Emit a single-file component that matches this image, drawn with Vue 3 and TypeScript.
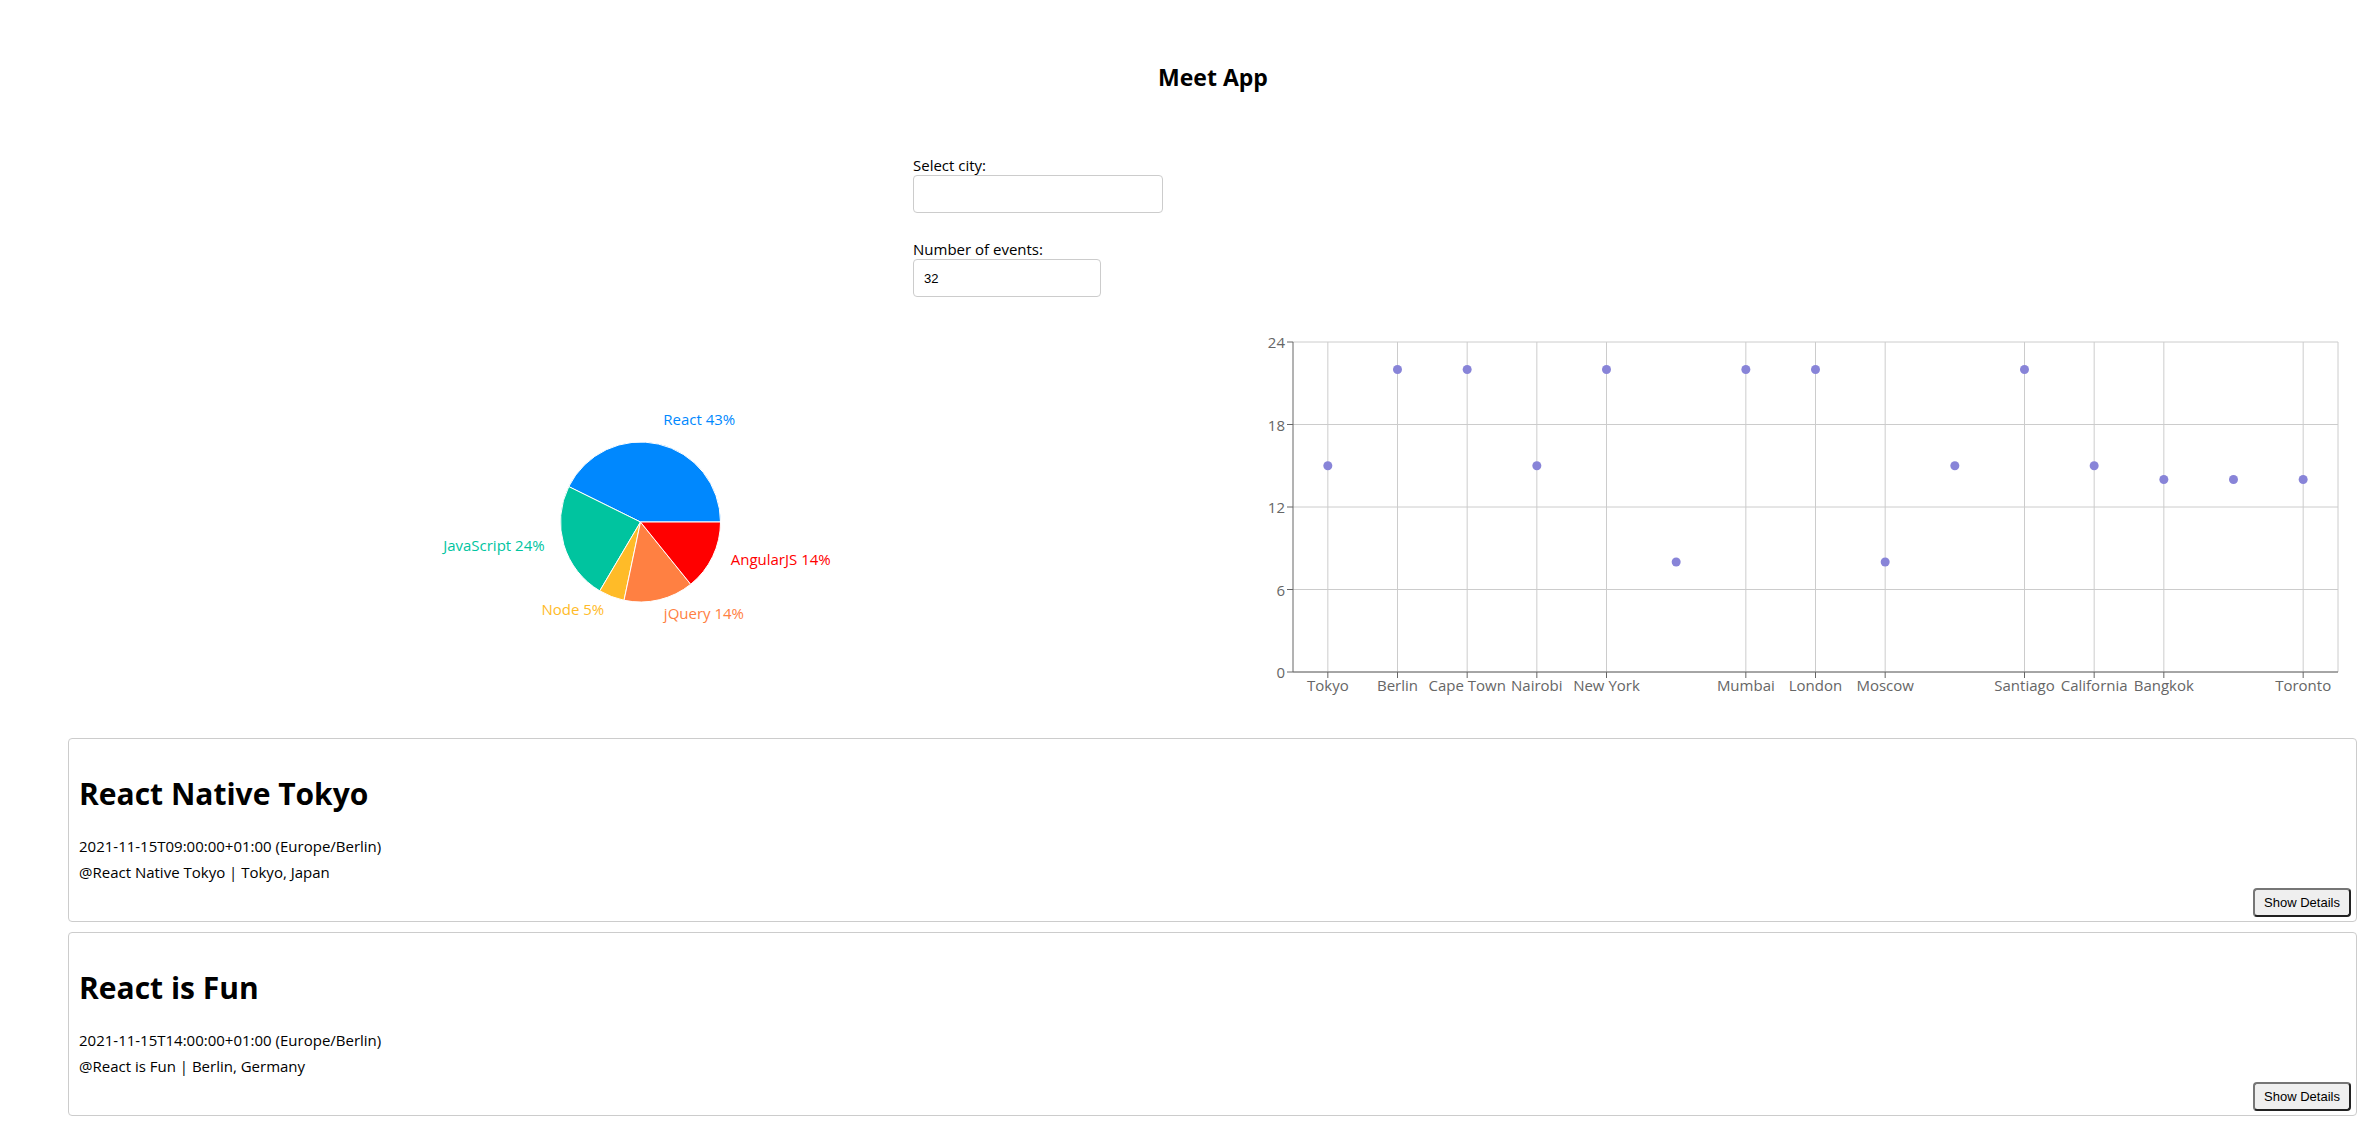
<script setup lang="ts">
import { computed, onBeforeUnmount, onMounted, ref } from 'vue'

interface Genre {
  name: string
  value: number
  color: string
}

interface CityCount {
  city: string
  count: number
  labelled: boolean
}

interface MeetEvent {
  id: number
  summary: string
  start: string
  location: string
}

const city = ref('')
const numberOfEvents = ref(32)

const genres: Genre[] = [
  { name: 'React', value: 427, color: '#0088fe' },
  { name: 'JavaScript', value: 238, color: '#00c49f' },
  { name: 'Node', value: 52, color: '#ffbb28' },
  { name: 'jQuery', value: 141, color: '#ff8042' },
  { name: 'AngularJS', value: 142, color: '#ff0000' },
]

const cities: CityCount[] = [
  { city: 'Tokyo', count: 15, labelled: true },
  { city: 'Berlin', count: 22, labelled: true },
  { city: 'Cape Town', count: 22, labelled: true },
  { city: 'Nairobi', count: 15, labelled: true },
  { city: 'New York', count: 22, labelled: true },
  { city: '', count: 8, labelled: false },
  { city: 'Mumbai', count: 22, labelled: true },
  { city: 'London', count: 22, labelled: true },
  { city: 'Moscow', count: 8, labelled: true },
  { city: '', count: 15, labelled: false },
  { city: 'Santiago', count: 22, labelled: true },
  { city: 'California', count: 15, labelled: true },
  { city: 'Bangkok', count: 14, labelled: true },
  { city: '', count: 14, labelled: false },
  { city: 'Toronto', count: 14, labelled: true },
]

const events: MeetEvent[] = [
  {
    id: 1,
    summary: 'React Native Tokyo',
    start: '2021-11-15T09:00:00+01:00 (Europe/Berlin)',
    location: '@React Native Tokyo | Tokyo, Japan',
  },
  {
    id: 2,
    summary: 'React is Fun',
    start: '2021-11-15T14:00:00+01:00 (Europe/Berlin)',
    location: '@React is Fun | Berlin, Germany',
  },
]

const chartHeight = 400
const chartWidth = ref(600)
const chartBox = ref<HTMLElement | null>(null)
let observer: ResizeObserver | undefined

function measure(): void {
  if (chartBox.value) chartWidth.value = chartBox.value.getBoundingClientRect().width
}

onMounted(() => {
  measure()
  observer = new ResizeObserver(measure)
  if (chartBox.value) observer.observe(chartBox.value)
})
onBeforeUnmount(() => observer?.disconnect())

// Pie: slices run counter-clockwise from three o'clock.
const outerRadius = 80
const labelRadius = 100

const slices = computed(() => {
  const cx = chartWidth.value / 2
  const cy = chartHeight / 2
  const total = genres.reduce((sum, g) => sum + g.value, 0)
  const point = (angle: number, r: number) => ({
    x: cx + r * Math.cos(angle),
    y: cy - r * Math.sin(angle),
  })
  let angle = 0
  return genres.map((g) => {
    const sweep = (g.value / total) * Math.PI * 2
    const from = point(angle, outerRadius)
    const to = point(angle + sweep, outerRadius)
    const label = point(angle + sweep / 2, labelRadius)
    angle += sweep
    const large = sweep > Math.PI ? 1 : 0
    return {
      ...g,
      path: `M${cx},${cy}L${from.x},${from.y}A${outerRadius},${outerRadius},0,${large},0,${to.x},${to.y}Z`,
      label,
      anchor: label.x > cx ? ('start' as const) : ('end' as const),
      text: `${g.name} ${((g.value / total) * 100).toFixed(0)}%`,
    }
  })
})

// Scatter plot
const yTicks = [0, 6, 12, 18, 24]
const plot = computed(() => ({
  left: 80,
  right: chartWidth.value - 20,
  top: 20,
  bottom: chartHeight - 50,
}))
const yFor = (v: number): number =>
  plot.value.bottom - (v / 24) * (plot.value.bottom - plot.value.top)
const points = computed(() => {
  const band = (plot.value.right - plot.value.left) / cities.length
  return cities.map((c, i) => ({
    ...c,
    x: plot.value.left + band * (i + 0.5),
    y: yFor(c.count),
  }))
})
const ticks = computed(() => points.value.filter((p) => p.labelled))
</script>

<template>
  <main class="app">
    <h2 class="title">Meet App</h2>

    <form class="filters" @submit.prevent>
      <div class="field">
        <label for="city">Select city:</label>
        <input id="city" v-model="city" class="city" type="text" />
      </div>
      <div class="field">
        <label for="count">Number of events:</label>
        <input id="count" v-model="numberOfEvents" class="count" type="text" />
      </div>
    </form>

    <section class="charts">
      <div ref="chartBox" class="chart">
        <svg :width="chartWidth" :height="chartHeight" role="img" aria-label="Events by topic">
          <path v-for="s in slices" :key="s.name" :d="s.path" :fill="s.color" stroke="#fff" />
          <text
            v-for="s in slices"
            :key="s.text"
            :x="s.label.x"
            :y="s.label.y"
            :fill="s.color"
            :text-anchor="s.anchor"
          >{{ s.text }}</text>
        </svg>
      </div>

      <div class="chart">
        <svg :width="chartWidth" :height="chartHeight" role="img" aria-label="Events by city">
          <g stroke="#ccc">
            <line v-for="t in yTicks" :key="t" :x1="plot.left" :x2="plot.right" :y1="yFor(t)" :y2="yFor(t)" />
            <line v-for="p in ticks" :key="p.city" :x1="p.x" :x2="p.x" :y1="plot.top" :y2="plot.bottom" />
            <line :x1="plot.right" :x2="plot.right" :y1="plot.top" :y2="plot.bottom" />
          </g>
          <g stroke="#666">
            <line :x1="plot.left" :x2="plot.right" :y1="plot.bottom" :y2="plot.bottom" />
            <line :x1="plot.left" :x2="plot.left" :y1="plot.top" :y2="plot.bottom" />
            <line v-for="t in yTicks" :key="t" :x1="plot.left - 6" :x2="plot.left" :y1="yFor(t)" :y2="yFor(t)" />
            <line v-for="p in ticks" :key="p.city" :x1="p.x" :x2="p.x" :y1="plot.bottom" :y2="plot.bottom + 6" />
          </g>
          <g fill="#666">
            <text v-for="t in yTicks" :key="t" :x="plot.left - 8" :y="yFor(t) + 6" text-anchor="end">{{ t }}</text>
            <text v-for="p in ticks" :key="p.city" :x="p.x" :y="plot.bottom + 19" text-anchor="middle">{{ p.city }}</text>
          </g>
          <circle v-for="(p, i) in points" :key="i" :cx="p.x" :cy="p.y" r="4.5" fill="#8884d8" />
        </svg>
      </div>
    </section>

    <ul class="events">
      <li v-for="e in events" :key="e.id" class="event">
        <h1>{{ e.summary }}</h1>
        <p>{{ e.start }}</p>
        <p>{{ e.location }}</p>
        <button type="button">Show Details</button>
      </li>
    </ul>
  </main>
</template>

<style>
body {
  margin: 0;
  background: #fff;
}
</style>

<style scoped>
.app {
  padding: 61px 5px 4px 68px;
  color: #000;
  font-family: 'Open Sans', 'Noto Sans', sans-serif;
  font-size: 15px;
  line-height: 20px;
}

.title {
  margin: 0 0 62px;
  font-size: 23px;
  line-height: 32px;
  text-align: center;
}

.filters {
  display: flex;
  flex-direction: column;
  gap: 26px;
  width: 600px;
  margin: 0 auto 25px;
}

.field {
  display: flex;
  flex-direction: column;
  align-items: flex-start;
}

.field input {
  box-sizing: border-box;
  height: 38px;
  padding: 0 10px;
  border: 1px solid #ccc;
  border-radius: 4px;
  background: #fff;
  color: #000;
  font-family: 'Liberation Sans', Arial, sans-serif;
  font-size: 13px;
}

.city {
  width: 250px;
}

.count {
  width: 188px;
}

.charts {
  display: flex;
  margin-bottom: 16px;
}

.chart {
  flex: 1 1 0;
  min-width: 0;
  height: 400px;
}

.chart svg {
  display: block;
}

.events {
  display: flex;
  flex-direction: column;
  gap: 10px;
  margin: 0 1px 0 0;
  padding: 0;
  list-style: none;
}

.event {
  display: flex;
  flex-direction: column;
  padding: 35px 5px 4px 10px;
  border: 1px solid #ccc;
  border-radius: 4px;
}

.event h1 {
  margin: 0 0 19px;
  font-size: 30px;
  line-height: 40px;
}

.event p {
  margin: 0;
  line-height: 26px;
}

.event button {
  align-self: flex-end;
  box-sizing: border-box;
  width: 98px;
  height: 29px;
  margin-top: 3px;
  padding: 0;
  border: 2px solid;
  border-color: #767676 #212121 #212121 #767676;
  border-radius: 4px;
  background: #efefef;
  color: #000;
  font-family: 'Liberation Sans', Arial, sans-serif;
  font-size: 13px;
}
</style>
